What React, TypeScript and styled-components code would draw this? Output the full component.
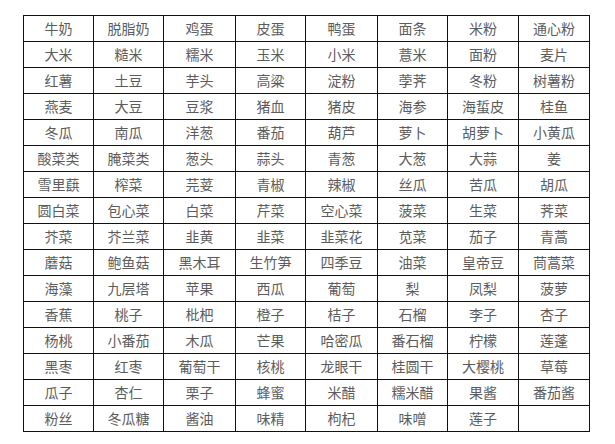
import React from "react";
import styled, { createGlobalStyle } from "styled-components";

const Global = createGlobalStyle`
  html, body { margin: 0; padding: 0; background: #fff; }
`;

const Page = styled.div`
  padding: 15px 0 0 23px;
  font-family: "Noto Sans CJK SC", "Microsoft YaHei", sans-serif;
`;

const Table = styled.table`
  border-collapse: collapse;
  table-layout: fixed;
  width: 567px;
`;

const Col = styled.col<{ $w: number }>`
  width: ${(p) => p.$w}px;
`;

const Cell = styled.td`
  border: 1px solid #111;
  height: 25px;
  padding: 0;
  text-align: center;
  vertical-align: middle;
  font-size: 14px;
  line-height: 25px;
  color: #5c5c5c;
  white-space: nowrap;
  overflow: hidden;
`;

const widths = [70, 70, 72, 70, 72, 70, 71, 71];

const rows: string[][] = [
  ["牛奶", "脱脂奶", "鸡蛋", "皮蛋", "鸭蛋", "面条", "米粉", "通心粉"],
  ["大米", "糙米", "糯米", "玉米", "小米", "薏米", "面粉", "麦片"],
  ["红薯", "土豆", "芋头", "高粱", "淀粉", "荸荠", "冬粉", "树薯粉"],
  ["燕麦", "大豆", "豆浆", "猪血", "猪皮", "海参", "海蜇皮", "桂鱼"],
  ["冬瓜", "南瓜", "洋葱", "番茄", "葫芦", "萝卜", "胡萝卜", "小黄瓜"],
  ["酸菜类", "腌菜类", "葱头", "蒜头", "青葱", "大葱", "大蒜", "姜"],
  ["雪里蕻", "榨菜", "芫荽", "青椒", "辣椒", "丝瓜", "苦瓜", "胡瓜"],
  ["圆白菜", "包心菜", "白菜", "芹菜", "空心菜", "菠菜", "生菜", "荠菜"],
  ["芥菜", "芥兰菜", "韭黄", "韭菜", "韭菜花", "苋菜", "茄子", "青蒿"],
  ["蘑菇", "鲍鱼菇", "黑木耳", "生竹笋", "四季豆", "油菜", "皇帝豆", "茼蒿菜"],
  ["海藻", "九层塔", "苹果", "西瓜", "葡萄", "梨", "凤梨", "菠萝"],
  ["香蕉", "桃子", "枇杷", "橙子", "桔子", "石榴", "李子", "杏子"],
  ["杨桃", "小番茄", "木瓜", "芒果", "哈密瓜", "番石榴", "柠檬", "莲蓬"],
  ["黑枣", "红枣", "葡萄干", "核桃", "龙眼干", "桂圆干", "大樱桃", "草莓"],
  ["瓜子", "杏仁", "栗子", "蜂蜜", "米醋", "糯米醋", "果酱", "番茄酱"],
  ["粉丝", "冬瓜糖", "酱油", "味精", "枸杞", "味噌", "莲子", ""],
];

export default function App() {
  return (
    <Page>
      <Global />
      <Table>
        <colgroup>
          {widths.map((w, i) => (
            <Col key={i} $w={w} />
          ))}
        </colgroup>
        <tbody>
          {rows.map((r, i) => (
            <tr key={i}>
              {r.map((c, j) => (
                <Cell key={j}>{c}</Cell>
              ))}
            </tr>
          ))}
        </tbody>
      </Table>
    </Page>
  );
}
